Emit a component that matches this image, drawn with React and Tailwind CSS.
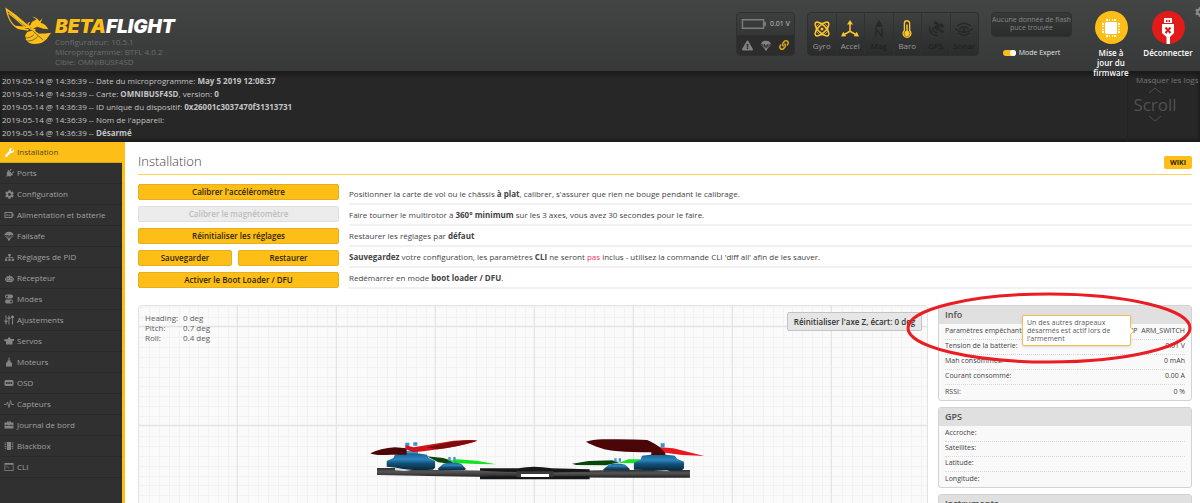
import React from 'react';
import { FaWrench, FaPlug, FaCog, FaSitemap, FaRobot, FaExclamationTriangle, FaLink } from 'react-icons/fa';

const YELLOW = '#fdbe18';

/* ---------- Icons ---------- */

const Svg = ({ children, className = 'w-[10px] h-[10px]', viewBox = '0 0 20 20' }) => (
  <svg viewBox={viewBox} className={className} fill="currentColor" aria-hidden="true">{children}</svg>
);

const PortsIcon = () => <FaPlug className="rotate-45" />;

const BatteryIcon = () => (
  <Svg>
    <path d="M1 4h16v3h2v6h-2v3H1z M3 6v8h12V6z" fillRule="evenodd" />
    <path d="M5 8h2v4H5z M11 8l-3 3h2v2l3-3h-2z" />
  </Svg>
);

const ParachuteIcon = ({ className }) => (
  <Svg className={className}>
    <path d="M1 8.5C1 4 5 1.500 10 1.500S19 4 19 8.500c-1-1-3-1-3.800.5-1-1.500-3-1.500-3.700 0h-3c-.7-1.500-2.700-1.500-3.700 0C4 7.500 2 7.500 1 8.500z" />
    <path d="M1.500 9l7.500 8h2l7.500-8M5 9.500L9.500 17M15 9.500L10.500 17M10 9v8" stroke="currentColor" strokeWidth="1.300" fill="none" />
    <path d="M8 15h4v4H8z" />
  </Svg>
);

const ModesIcon = () => (
  <Svg>
    <path d="M6 1h8a4 4 0 0 1 0 8H6a4 4 0 0 1 0-8z M6 3a2 2 0 1 0 0 4 2 2 0 0 0 0-4z" fillRule="evenodd" />
    <path d="M6 11h8a4 4 0 0 1 0 8H6a4 4 0 0 1 0-8z M14 13a2 2 0 1 0 0 4 2 2 0 0 0 0-4z" fillRule="evenodd" />
  </Svg>
);

const SlidersIcon = () => (
  <Svg><path d="M3 1h2v10h2v3H5v5H3v-5H1v-3h2z M9 1h2v4h2v3h-2v11H9V8H7V5h2z M16 1h2v1h2v4h-2v13h-2V6h-2V2h2z" /></Svg>
);

const ServoIcon = () => (
  <Svg><path d="M8 3h5v3h7v4h-3v7H4v-6L0 9V7l8-1z" /></Svg>
);

const MotorIcon = () => (
  <Svg><path d="M9 1h2v6h2v3l3 2v7H4v-7l3-2V7h2z" /></Svg>
);

const OsdIcon = () => (
  <Svg>
    <path d="M3 4h14l2 2v8l-2 2H3l-2-2V6z M4 8v4h3V8z M8.500 8v4h3V8z M13 8v4h3V8z" fillRule="evenodd" />
  </Svg>
);

const PulseIcon = () => (
  <Svg><path d="M0 11h5l2-5 3 11 3-14 2 8h5" fill="none" stroke="currentColor" strokeWidth="1.800" /></Svg>
);

const CaseIcon = () => (
  <Svg>
    <path d="M1 5h5V3h8v2h5v5h-4V9h-2v1H7V9H5v1H1z M8 4.500V5h4v-.5z M1 11h4v1h2v-1h6v1h2v-1h4v6H1z" fillRule="evenodd" />
  </Svg>
);

const ChipIcon = () => (
  <Svg>
    <path d="M6 2h8v16H6z" />
    <path d="M3 3v14M17 3v14" stroke="currentColor" strokeWidth="3" strokeDasharray="2 1.500" />
  </Svg>
);

const CliIcon = () => (
  <Svg>
    <path d="M1 2h18v16H1z M2.500 5.500v11h15v-11z" fillRule="evenodd" />
    <path d="M4.500 8l2.500 1.500L4.500 11M8 11.500h3" fill="none" stroke="currentColor" strokeWidth="1.200" />
  </Svg>
);

const GyroIcon = () => (
  <Svg className="w-[18px] h-[18px]" viewBox="0 0 24 24">
    <g fill="none" stroke="currentColor" strokeWidth="2">
      <ellipse cx="12" cy="12" rx="12" ry="5" transform="rotate(45 12 12)" />
      <ellipse cx="12" cy="12" rx="12" ry="5" transform="rotate(-45 12 12)" />
      <circle cx="12" cy="12" r="8" strokeWidth="1" />
    </g>
    <circle cx="12" cy="12" r="2" />
  </Svg>
);

const AccelIcon = () => (
  <Svg className="w-[18px] h-[18px]" viewBox="0 0 24 24">
    <path d="M12 3v12L3 20M12 15l9 5" fill="none" stroke="currentColor" strokeWidth="2" />
    <path d="M12 0l4 6H8z M0 22l3-6.500 4 6z M24 22l-3-6.500-4 6z" />
  </Svg>
);

const MagIcon = () => (
  <Svg className="w-[18px] h-[18px]" viewBox="0 0 24 24">
    <path d="M12 0l5 9H7z" />
    <path d="M8 23V12l8 10V11" fill="none" stroke="currentColor" strokeWidth="2" />
  </Svg>
);

const BaroIcon = () => (
  <Svg className="w-[18px] h-[18px]" viewBox="0 0 24 24">
    <path d="M8.500 14V4.500a3.500 3.500 0 0 1 7 0V14a5.200 5.200 0 1 1-7 0z" fill="none" stroke="currentColor" strokeWidth="1.800" />
    <circle cx="12" cy="18" r="3.600" />
    <path d="M11 6h2v10h-2z" />
  </Svg>
);

const GpsIcon = () => (
  <Svg className="w-[18px] h-[18px]" viewBox="0 0 24 24">
    <path d="M11 1l4 3 2 2 2-2 4 4-3 3-4-4-1 1 3 3-4 4-5-5 4-4-4-1z M18 12l5 3-2 3-5-4z" />
    <path d="M8 10a6 6 0 0 0 6 7M4 9c-1 7 3 12 11 12" fill="none" stroke="currentColor" strokeWidth="2.200" />
  </Svg>
);

const SonarIcon = () => (
  <Svg className="w-[20px] h-[18px]" viewBox="0 0 26 24">
    <path d="M1 11c7 7 17 7 24 0M4 8c6-5 12-5 18 0M7 12c4-4 8-4 12 0" fill="none" stroke="currentColor" strokeWidth="2" />
    <path d="M5 17c5 4 11 4 16 0" fill="none" stroke="currentColor" strokeWidth="2" />
    <circle cx="13" cy="13" r="2" />
  </Svg>
);

const FirmwareIcon = () => (
  <Svg className="w-[18px] h-[18px]" viewBox="0 0 18 18">
    <path d="M4 3h10l1 1v10l-1 1H4l-1-1V4z" />
    <path d="M4 0h2v2H4z M7 0h1v2H7z M10 0h1v2h-1z M12 0h2v2h-2z M4 16h2v2H4z M7 16h1v2H7z M10 16h1v2h-1z M12 16h2v2h-2z" />
    <path d="M0 4h2v2H0z M0 7h2v1H0z M0 10h2v1H0z M0 12h2v2H0z M16 4h2v2h-2z M16 7h2v1h-2z M16 10h2v1h-2z M16 12h2v2h-2z" />
  </Svg>
);

const UsbIcon = () => (
  <Svg className="w-[14px] h-[27px]" viewBox="0 0 14 27">
    <path d="M3 1h8v5H3z M5 3v2h1.500V3z M7.500 3v2H9V3z" fillRule="evenodd" />
    <path d="M1 7h12v9l-4 4v7H5.500v-7L1 16z" />
    <path d="M4.500 10.500l5 5.500M9.500 10.500l-5 5.500" stroke="#e11a1a" strokeWidth="2" />
  </Svg>
);

/* ---------- Header ---------- */

const Logo = () => (
  <div className="flex">
    <svg viewBox="0 0 140 112" className="w-[47px] h-[38px] mt-[7px] ml-[5px] shrink-0" aria-hidden="true">
      <path d="M1 1l32 22 35 30 12 4-5 5-18 1 14 3-2 4-28-4C24 58 8 42 1 1z M8 12c3 20 12 35 23 43l32 3C46 46 26 28 8 12z" fill={YELLOW} fillRule="evenodd" />
      <path d="M10 18c18 12 34 28 50 42" stroke={YELLOW} strokeWidth="3" fill="none" />
      <path d="M80 28c10 2 18 6 23 14l9-9-6 13c12 3 19 10 23 20l-14-2-19-6-16 8-6-10 6-12 14-8z" fill={YELLOW} />
      <path d="M73 45c-8 6-6 16 4 20l14 3" fill="none" stroke={YELLOW} strokeWidth="4" />
      <path d="M60 84l6-10 20-6 14 10 20 0 18-2c-10 10-14 27-36 32-18 4-34 0-40-12z" fill={YELLOW} />
      <path d="M58 92c14 0 20-3 28-10M64 101c16 0 24-4 34-14M84 72l30 26" stroke="#3b3d3c" strokeWidth="2" fill="none" />
    </svg>
    <div className="ml-[3px] mt-[17px]">
      <div className="font-['Inter'] font-black italic text-[19px] leading-[20px] text-white">
        <span className="text-[#fdbe18]">BETA</span>FLIGHT
      </div>
      <div className="text-[8px] leading-[10px] text-[#6b6d6c]">
        <div>Configurateur: 10.5.1</div>
        <div>Microprogramme: BTFL 4.0.2</div>
        <div>Cible: OMNIBUSF4SD</div>
      </div>
    </div>
  </div>
);

const sensors = [
  { name: 'Gyro', icon: GyroIcon, on: true },
  { name: 'Accel', icon: AccelIcon, on: true },
  { name: 'Mag', icon: MagIcon, on: false },
  { name: 'Baro', icon: BaroIcon, on: true },
  { name: 'GPS', icon: GpsIcon, on: false },
  { name: 'Sonar', icon: SonarIcon, on: false },
];

const Header = () => (
  <header className="relative z-10 h-[72px] flex justify-between bg-linear-to-b from-[#424544] to-[#373938] border-b border-[#1c1c1c]">
    <Logo />

    <div className="flex items-start shrink-0">
      {/* Battery + quick status */}
      <div className="mt-3 w-[59px] h-[44px] rounded border border-[#2f3130] bg-[#434443] overflow-hidden flex flex-col">
        <div className="flex-1 flex items-center gap-1 pl-1 bg-linear-to-b from-[#3d3f3e] to-[#353636]">
          <svg viewBox="0 0 26 12" className="w-[25px] h-[12px]" aria-hidden="true">
            <path d="M1.500 1.500h22v9h-22z" fill="none" stroke="#7d7d7d" strokeWidth="1.500" />
            <path d="M24 4h2v4h-2z" fill="#7d7d7d" />
          </svg>
          <span className="text-[7px] text-[#c4c4c4] whitespace-nowrap">0.01 V</span>
        </div>
        <div className="h-[20px] flex items-center justify-around px-[2px] bg-[#2c2c2c] text-[#818181]">
          <FaExclamationTriangle className="w-[11px] h-[11px]" />
          <ParachuteIcon className="w-[12px] h-[11px]" />
          <FaLink className="w-[10px] h-[10px] text-[#dda51b]" />
        </div>
      </div>

      {/* Sensors */}
      <div className="mt-3 ml-3 w-[172px] h-[44px] flex rounded border border-[#2d2f2e] bg-linear-to-b from-[#3e403f] to-[#2a2b2a] overflow-hidden">
        {sensors.map(({ name, icon: Icon, on }) => (
          <div key={name} className="flex-1 flex flex-col items-center pt-[7px] border-r border-[#303131] last:border-r-0">
            <span className={on ? 'text-[#fdc52a]' : 'text-[#262727]'}><Icon /></span>
            <span className={`text-[8px] leading-[16px] ${on ? 'text-[#9c9c9c]' : 'text-[#1c1d1d]'}`}>{name}</span>
          </div>
        ))}
      </div>

      {/* Dataflash + expert mode */}
      <div className="ml-3 mt-3 w-[81px]">
        <div className="h-[25px] rounded border border-[#2f3130] bg-linear-to-b from-[#373938] to-[#2b2c2c] text-[7px] leading-[8px] text-[#868787] text-center pt-[3px]">
          Aucune donnée de flash puce trouvée
        </div>
        <label className="mt-[11px] flex items-center justify-center gap-[3px] text-[7px] leading-[9px] text-[#e2e2e2]">
          <input type="checkbox" defaultChecked className="peer sr-only" />
          <span className="w-[13px] h-[6px] rounded-full bg-[#fdbe18] flex justify-end">
            <span className="w-[6px] h-[6px] rounded-full bg-white" />
          </span>
          Mode Expert
        </label>
      </div>

      <button className="ml-[14px] mt-[11px] w-[50px] flex flex-col items-center">
        <span className="w-[33px] h-[33px] rounded-full bg-[#fdbe18] text-white flex items-center justify-center"><FirmwareIcon /></span>
        <span className="w-[36px] mt-1 text-[8px] leading-[10px] font-semibold text-white">Mise à jour du firmware</span>
      </button>
      <button className="mt-[11px] w-[64px] flex flex-col items-center">
        <span className="w-[33px] h-[33px] rounded-full bg-[#e11a1a] text-white flex items-end justify-center overflow-hidden"><UsbIcon /></span>
        <span className="mt-1 text-[8px] leading-[10px] font-semibold text-white">Déconnecter</span>
      </button>
    </div>
    <FaCog className="absolute -right-[5px] top-[7px] w-[10px] h-[10px] text-[#8b8c8b]" />
  </header>
);

/* ---------- Log ---------- */

const logs = [
  <>Date du microprogramme: <b>May 5 2019 12:08:37</b></>,
  <>Carte: <b>OMNIBUSF4SD</b>, version: <b>0</b></>,
  <>ID unique du dispositif: <b>0x26001c3037470f31313731</b></>,
  <>Nom de l'appareil:</>,
  <b>Désarmé</b>,
];

const LogPanel = () => (
  <div className="h-[70px] flex justify-between bg-[#272727] shadow-[inset_0_3px_4px_#1a1a1a,inset_0_-2px_3px_#1c1c1c] overflow-hidden">
    <div className="pl-[2px] pt-[2px] text-[8px] text-[#c3c3c3]">
      {logs.map((entry, i) => (
        <p key={i} className="leading-[13px] whitespace-nowrap">2019-05-14 @ 14:36:39 -- {entry}</p>
      ))}
    </div>
    <div className="w-[73px] border-l border-[#222] text-[#757575]">
      <button className="block ml-2 mt-[2px] text-[8px] leading-[11px] whitespace-nowrap">Masquer les logs</button>
      <div className="w-[54px] flex flex-col items-center text-[#505050]">
        <svg viewBox="0 0 12 6" className="w-3 h-[6px] mt-[2px]" aria-hidden="true"><path d="M0 6l6-5 6 5" fill="none" stroke="currentColor" /></svg>
        <span className="text-[17px] leading-[23px]">Scroll</span>
        <svg viewBox="0 0 12 6" className="w-3 h-[6px]" aria-hidden="true"><path d="M0 0l6 5 6-5" fill="none" stroke="currentColor" /></svg>
      </div>
    </div>
  </div>
);

/* ---------- Sidebar ---------- */

const tabs = [
  { label: 'Installation', icon: FaWrench, active: true },
  { label: 'Ports', icon: PortsIcon },
  { label: 'Configuration', icon: FaCog },
  { label: 'Alimentation et batterie', icon: BatteryIcon },
  { label: 'Failsafe', icon: ParachuteIcon },
  { label: 'Réglages de PID', icon: FaSitemap },
  { label: 'Récepteur', icon: FaRobot },
  { label: 'Modes', icon: ModesIcon },
  { label: 'Ajustements', icon: SlidersIcon },
  { label: 'Servos', icon: ServoIcon },
  { label: 'Moteurs', icon: MotorIcon },
  { label: 'OSD', icon: OsdIcon },
  { label: 'Capteurs', icon: PulseIcon },
  { label: 'Journal de bord', icon: CaseIcon },
  { label: 'Blackbox', icon: ChipIcon },
  { label: 'CLI', icon: CliIcon },
];

const Sidebar = () => (
  <nav className="w-[125px] shrink-0 bg-[#303030] border-r-[3px] border-[#fdbe18]">
    {tabs.map(({ label, icon: Icon, active }) => (
      <a
        key={label}
        href="#"
        className={`h-[21px] pl-1 flex items-center gap-[3px] text-[8px] border-b whitespace-nowrap ${active ? 'bg-[#fdbe18] border-[#dba718] text-[#584515]' : 'border-[#292929] text-[#a0a0a0]'}`}
      >
        <span className={`w-[10px] flex justify-center text-[9px] ${active ? 'text-white' : 'text-[#848484]'}`}><Icon /></span>
        {label}
      </a>
    ))}
  </nav>
);

/* ---------- Setup tab ---------- */

const Btn = ({ children, disabled, className = 'w-full' }) => (
  <button
    disabled={disabled}
    className={`h-[16px] rounded-[2px] border text-[8px] leading-[14px] font-semibold ${disabled ? 'bg-[#ececec] border-[#e0e0e0] text-[#bdbdbd]' : 'bg-[#fdbe18] border-[#e8ae1c] text-[#2e2505]'} ${className}`}
  >
    {children}
  </button>
);

const descriptions = [
  <>Positionner la carte de vol ou le châssis <b>à plat</b>, calibrer, s'assurer que rien ne bouge pendant le calibrage.</>,
  <>Faire tourner le multirotor à <b>360° minimum</b> sur les 3 axes, vous avez 30 secondes pour le faire.</>,
  <>Restaurer les réglages par <b>défaut</b></>,
  <><b>Sauvegardez</b> votre configuration, les paramètres <b>CLI</b> ne seront <span className="text-[#f0325a]">pas</span> inclus - utilisez la commande CLI 'diff all' afin de les sauver.</>,
  <>Redémarrer en mode <b>boot loader / DFU</b>.</>,
];

const Quad = () => (
  <svg x="50%" y="0" width="1" height="1" overflow="visible">
    <defs>
      <linearGradient id="motor" x1="0" y1="0" x2="0" y2="1">
        <stop offset="0" stopColor="#17618f" />
        <stop offset=".35" stopColor="#2d86c0" />
        <stop offset=".6" stopColor="#12517a" />
        <stop offset="1" stopColor="#082739" />
      </linearGradient>
      <linearGradient id="arm" x1="0" y1="0" x2="0" y2="1">
        <stop offset="0" stopColor="#303030" />
        <stop offset=".4" stopColor="#555" />
        <stop offset="1" stopColor="#222" />
      </linearGradient>
    </defs>
    {/* drawn at 3 units per pixel, centred on the frame */}
    <g transform="translate(-173 114) scale(.3333)">
      {/* rear props */}
      <path d="M200 109l50 5 30 10-5 8-40-5z" fill="#06480b" />
      <path d="M270 124l20-6 60 4 58 11-60-1-65-3z" fill="#12e51d" />
      <path d="M636 131l50-8 70-2 22 6-40 9-90-1z" fill="#06480b" />
      <path d="M775 129l30-11 40 0 40 4-30 8z" fill="#12e51d" />
      <path d="M265 111h7v12h-7z M280 111h7v12h-7z M763 115h7v10h-7z M776 115h7v10h-7z" fill="#3796cf" />
      <path d="M250 131q27-7 54 0l14 16-5 4h-76l-4-5z" fill="url(#motor)" />
      <path d="M746 134q25-7 50 0l14 14-4 4h-74l-3-3z" fill="url(#motor)" />
      {/* frame */}
      <path d="M51 144h54l20 6 120 0 245 4v18l-245-3-194-4z" fill="url(#arm)" />
      <path d="M990 150H780l-250 4v18l270 1 190 0z" fill="url(#arm)" />
      <path d="M105 144l50 6-20 3-30-2z M880 153l40-3 10 4z" fill="#ddd" />
      <path d="M360 145h115q45-9 100 0l114 3v7l-110 2H480l-120-5z" fill="#181818" />
      <path d="M360 169h329v9H360z" fill="#181818" />
      <path d="M470 154h110v17H470z" fill="#3b3b3b" />
      <path d="M483 162h84v9h-84z" fill="#fff" />
      {/* front motors */}
      <path d="M136 68h12v10h-12z M160 67h12v10h-12z M136 92h38v10h-38z M902 70h12v12h-12z" fill="#3796cf" />
      <path d="M105 104q48-8 96 0l4 9 20 10v20l-6 6q-70 4-110-6l-29-3v-17l20-9z" fill="url(#motor)" />
      <path d="M846 107q50-7 98 0l8 10 20 8v20l-6 6h-80l-64-2v-21l20-9z" fill="url(#motor)" />
      {/* front props */}
      <path d="M31 100q30-15 74-18l35 3v19H95q-50 4-64-4z" fill="#4b0608" />
      <path d="M136 76l25 6 120-20q60-4 71 0-30 12-90 22l-72 10-30 3-24-10z" fill="#d0151a" />
      <path d="M200 82l81-18q60-6 71-2-50 16-120 26z" fill="#7c0b0e" />
      <path d="M678 65q20-6 50-7 90-1 134 2 20 8 54 33v12h-42v-8q-120 0-150-12-30-10-46-20z" fill="#4b0608" />
      <path d="M900 82l40 3 93 23q-60 0-118-10z" fill="#e8191e" />
    </g>
  </svg>
);

const gridLines = [10, 20, 30, 40, 50, 59, 69, 79, 89];

const Preview = () => (
  <div className="relative flex-1 h-[330px] rounded border border-[#e2e2e2] bg-[#fafafa] overflow-hidden">
    <svg className="absolute inset-0 w-full h-full" aria-hidden="true">
      <pattern id="grid" width="99" height="99" y="21" patternUnits="userSpaceOnUse">
        {gridLines.map((n) => (
          <path key={n} d={`M${n}.5 0v99M0 ${n}.5h99`} stroke="#f2f2f2" fill="none" />
        ))}
        <path d="M98.500 0v99M0 -.5h99M0 98.500h99" stroke="#e4e4e4" strokeWidth="1.500" fill="none" />
      </pattern>
      <rect width="100%" height="100%" fill="url(#grid)" />
      <Quad />
    </svg>
    <dl className="relative w-[80px] ml-[6px] mt-[7px] grid grid-cols-[38px_1fr] text-[8px] leading-[10px] text-[#5c5c5c]">
      <dt>Heading:</dt><dd>0 deg</dd>
      <dt>Pitch:</dt><dd>0.7 deg</dd>
      <dt>Roll:</dt><dd>0.4 deg</dd>
    </dl>
    <button className="absolute right-[5px] top-[6px] w-[135px] h-[19px] rounded-[2px] border border-[#c4c4c4] bg-[#e6e6e6] text-[8px] font-semibold text-[#333]">
      Réinitialiser l'axe Z, écart: 0 deg
    </button>
  </div>
);

const Card = ({ title, rows = [] }) => (
  <section className="rounded-[3px] border border-[#d3d3d3] bg-[#f9f9f9] mb-[6px] pb-px overflow-hidden">
    <h2 className="h-[18px] pl-[6px] bg-[#e0e0e0] text-[9px] leading-[18px] font-semibold text-[#505050]">{title}</h2>
    <table className="w-[calc(100%-12px)] mx-[6px] text-[7px] text-[#444]">
      <tbody>
        {rows.map(([label, value]) => (
          <tr key={label} className="h-[15px] border-b border-dotted border-[#d8d8d8] last:border-b-0">
            <th scope="row" className="p-0 font-normal text-left whitespace-nowrap">{label}</th>
            <td className="p-0 text-right whitespace-nowrap">{value}</td>
          </tr>
        ))}
      </tbody>
    </table>
  </section>
);

const infoRows = [
  ['Paramètres empêchant', 'MSP\u00a0\u00a0ARM_SWITCH'],
  ['Tension de la batterie:', '0.01 V'],
  ['Mah consommés:', '0 mAh'],
  ['Courant consommé:', '0.00 A'],
  ['RSSI:', '0 %'],
];

const gpsRows = [['Accroche:', ''], ['Satellites:', ''], ['Latitude:', ''], ['Longitude:', '']];

const InfoColumn = () => (
  <div className="relative w-[254px] shrink-0">
    <Card title="Info" rows={infoRows} />
    <Card title="GPS" rows={gpsRows} />
    <Card title="Instruments" />

    {/* Arming flag tooltip */}
    <div role="tooltip" className="absolute right-[61px] top-[10px] w-[109px] h-[31px] pl-1 pt-[3px] rounded-[2px] border border-[#f0bf50] bg-white text-[7px] leading-[8px] text-[#5a5a5a] shadow-sm">
      Un des autres drapeaux désarmés est actif lors de l'armement
      <svg viewBox="0 0 5 8" className="absolute -right-[5px] top-[11px] w-[5px] h-[8px]" aria-hidden="true">
        <path d="M0 0l4 4-4 4" fill="#fff" stroke="#f0bf50" />
      </svg>
    </div>
    <svg viewBox="0 0 286 74" className="absolute -left-[32px] -top-[14px] w-[286px] h-[74px] pointer-events-none" aria-hidden="true">
      <ellipse cx="143" cy="37" rx="141" ry="34" fill="none" stroke="#ea1c24" strokeWidth="3" />
    </svg>
  </div>
);

const SetupTab = () => (
  <main className="flex-1 bg-white pl-[13px] pr-2 pt-[10px]">
    <div className="h-[23px] flex justify-between items-center border-b border-[#fcd05a] pb-[2px]">
      <h1 className="text-[13px] font-light text-[#444]">Installation</h1>
      <a href="#" className="w-[28px] h-[13px] rounded-[2px] bg-[#fdbe18] text-[7px] leading-[13px] font-bold text-center text-[#2e2505]">WIKI</a>
    </div>

    <div className="mt-[9px] flex gap-[10px]">
      <div className="w-[201px] shrink-0 flex flex-col gap-[6px]">
        <Btn>Calibrer l'accéléromètre</Btn>
        <Btn disabled>Calibrer le magnétomètre</Btn>
        <Btn>Réinitialiser les réglages</Btn>
        <div className="flex gap-[6px]">
          <Btn className="w-[94px]">Sauvegarder</Btn>
          <Btn className="flex-1">Restaurer</Btn>
        </div>
        <Btn>Activer le Boot Loader / DFU</Btn>
      </div>
      <div className="flex-1 text-[8px] text-[#444]">
        {descriptions.map((text, i) => (
          <p key={i} className="h-[21px] leading-[20px] border-b-2 border-[#f1f1f1] whitespace-nowrap">{text}</p>
        ))}
      </div>
    </div>

    <div className="mt-4 flex items-start gap-[10px]">
      <Preview />
      <InfoColumn />
    </div>
  </main>
);

const App = () => (
  <div className="h-screen overflow-hidden flex flex-col bg-white font-['Open_Sans',sans-serif]">
    <Header />
    <LogPanel />
    <div className="flex-1 min-h-0 flex overflow-hidden">
      <Sidebar />
      <SetupTab />
    </div>
  </div>
);

export default App;
